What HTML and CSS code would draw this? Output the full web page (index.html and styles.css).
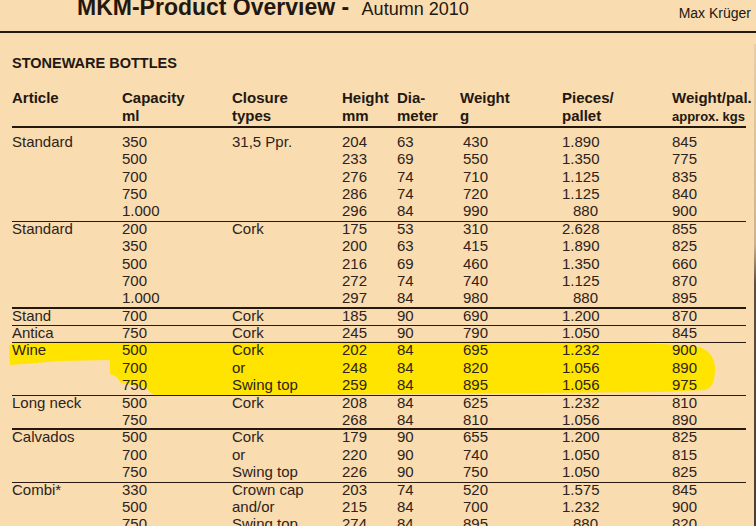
FILE: index.html
```html
<!DOCTYPE html>
<html lang="en">
<head>
<meta charset="utf-8">
<title>MKM-Product Overview - Autumn 2010</title>
<link rel="stylesheet" href="styles.css">
</head>
<body>
<div class="page">
  <svg class="marker" width="756" height="526" viewBox="0 0 756 526" aria-hidden="true">
    <path d="M 9 346 C 9 342, 30 341, 60 341 L 540 341 C 620 342, 680 344, 700 347 C 712 352, 716 362, 715 372 C 714 382, 712 388, 705 390 L 660 392 L 420 394 L 155 396 C 150 393, 148 389, 145 387 L 121 383 L 117 377 L 110 374 L 110 360 L 60 361 L 10 365 Z" fill="#ffe400"/>
  </svg>

  <header class="topbar">
    <h1 class="title"><span class="title-main">MKM-Product Overview -</span> <span class="title-season">Autumn 2010</span></h1>
    <div class="author">Max Krüger</div>
  </header>

  <section class="sheet">
    <h2 class="section-title">STONEWARE BOTTLES</h2>
    <div class="table">
      <div class="row head">
        <div class="c c1">Article</div>
        <div class="c c2">Capacity<br>ml</div>
        <div class="c c3">Closure<br>types</div>
        <div class="c c4">Height<br>mm</div>
        <div class="c c5">Dia-<br>meter</div>
        <div class="c c6">Weight<br>g</div>
        <div class="c c7">Pieces/<br>pallet</div>
        <div class="c c8">Weight/pal.<br><span class="small">approx. kgs</span></div>
      </div>
      <div class="body">
        <div class="row"><div class="c c1">Standard</div><div class="c c2">350</div><div class="c c3">31,5 Ppr.</div><div class="c c4">204</div><div class="c c5">63</div><div class="c c6">430</div><div class="c c7">1.890</div><div class="c c8">845</div></div>
        <div class="row"><div class="c c1"></div><div class="c c2">500</div><div class="c c3"></div><div class="c c4">233</div><div class="c c5">69</div><div class="c c6">550</div><div class="c c7">1.350</div><div class="c c8">775</div></div>
        <div class="row"><div class="c c1"></div><div class="c c2">700</div><div class="c c3"></div><div class="c c4">276</div><div class="c c5">74</div><div class="c c6">710</div><div class="c c7">1.125</div><div class="c c8">835</div></div>
        <div class="row"><div class="c c1"></div><div class="c c2">750</div><div class="c c3"></div><div class="c c4">286</div><div class="c c5">74</div><div class="c c6">720</div><div class="c c7">1.125</div><div class="c c8">840</div></div>
        <div class="row thin"><div class="c c1"></div><div class="c c2">1.000</div><div class="c c3"></div><div class="c c4">296</div><div class="c c5">84</div><div class="c c6">990</div><div class="c c7">880</div><div class="c c8">900</div></div>

        <div class="row"><div class="c c1">Standard</div><div class="c c2">200</div><div class="c c3">Cork</div><div class="c c4">175</div><div class="c c5">53</div><div class="c c6">310</div><div class="c c7">2.628</div><div class="c c8">855</div></div>
        <div class="row"><div class="c c1"></div><div class="c c2">350</div><div class="c c3"></div><div class="c c4">200</div><div class="c c5">63</div><div class="c c6">415</div><div class="c c7">1.890</div><div class="c c8">825</div></div>
        <div class="row"><div class="c c1"></div><div class="c c2">500</div><div class="c c3"></div><div class="c c4">216</div><div class="c c5">69</div><div class="c c6">460</div><div class="c c7">1.350</div><div class="c c8">660</div></div>
        <div class="row"><div class="c c1"></div><div class="c c2">700</div><div class="c c3"></div><div class="c c4">272</div><div class="c c5">74</div><div class="c c6">740</div><div class="c c7">1.125</div><div class="c c8">870</div></div>
        <div class="row thick"><div class="c c1"></div><div class="c c2">1.000</div><div class="c c3"></div><div class="c c4">297</div><div class="c c5">84</div><div class="c c6">980</div><div class="c c7">880</div><div class="c c8">895</div></div>

        <div class="row thin"><div class="c c1">Stand</div><div class="c c2">700</div><div class="c c3">Cork</div><div class="c c4">185</div><div class="c c5">90</div><div class="c c6">690</div><div class="c c7">1.200</div><div class="c c8">870</div></div>

        <div class="row thin"><div class="c c1">Antica</div><div class="c c2">750</div><div class="c c3">Cork</div><div class="c c4">245</div><div class="c c5">90</div><div class="c c6">790</div><div class="c c7">1.050</div><div class="c c8">845</div></div>

        <div class="row"><div class="c c1">Wine</div><div class="c c2">500</div><div class="c c3">Cork</div><div class="c c4">202</div><div class="c c5">84</div><div class="c c6">695</div><div class="c c7">1.232</div><div class="c c8">900</div></div>
        <div class="row"><div class="c c1"></div><div class="c c2">700</div><div class="c c3">or</div><div class="c c4">248</div><div class="c c5">84</div><div class="c c6">820</div><div class="c c7">1.056</div><div class="c c8">890</div></div>
        <div class="row thin"><div class="c c1"></div><div class="c c2">750</div><div class="c c3">Swing top</div><div class="c c4">259</div><div class="c c5">84</div><div class="c c6">895</div><div class="c c7">1.056</div><div class="c c8">975</div></div>

        <div class="row"><div class="c c1">Long neck</div><div class="c c2">500</div><div class="c c3">Cork</div><div class="c c4">208</div><div class="c c5">84</div><div class="c c6">625</div><div class="c c7">1.232</div><div class="c c8">810</div></div>
        <div class="row thick"><div class="c c1"></div><div class="c c2">750</div><div class="c c3"></div><div class="c c4">268</div><div class="c c5">84</div><div class="c c6">810</div><div class="c c7">1.056</div><div class="c c8">890</div></div>

        <div class="row"><div class="c c1">Calvados</div><div class="c c2">500</div><div class="c c3">Cork</div><div class="c c4">179</div><div class="c c5">90</div><div class="c c6">655</div><div class="c c7">1.200</div><div class="c c8">825</div></div>
        <div class="row"><div class="c c1"></div><div class="c c2">700</div><div class="c c3">or</div><div class="c c4">220</div><div class="c c5">90</div><div class="c c6">740</div><div class="c c7">1.050</div><div class="c c8">815</div></div>
        <div class="row thin"><div class="c c1"></div><div class="c c2">750</div><div class="c c3">Swing top</div><div class="c c4">226</div><div class="c c5">90</div><div class="c c6">750</div><div class="c c7">1.050</div><div class="c c8">825</div></div>

        <div class="row"><div class="c c1">Combi*</div><div class="c c2">330</div><div class="c c3">Crown cap</div><div class="c c4">203</div><div class="c c5">74</div><div class="c c6">520</div><div class="c c7">1.575</div><div class="c c8">845</div></div>
        <div class="row"><div class="c c1"></div><div class="c c2">500</div><div class="c c3">and/or</div><div class="c c4">215</div><div class="c c5">84</div><div class="c c6">700</div><div class="c c7">1.232</div><div class="c c8">900</div></div>
        <div class="row"><div class="c c1"></div><div class="c c2">750</div><div class="c c3">Swing top</div><div class="c c4">274</div><div class="c c5">84</div><div class="c c6">895</div><div class="c c7">880</div><div class="c c8">820</div></div>
      </div>
    </div>
  </section>

  <div class="edge"></div>
</div>
</body>
</html>
```

FILE: styles.css
```css
html, body {
  margin: 0;
  padding: 0;
  background: #f9dcb0;
}

body {
  font-family: "Liberation Sans", Arial, sans-serif;
  color: #2d231b;
}

.page {
  position: relative;
  width: 756px;
  height: 526px;
  overflow: hidden;
  background: #f9dcb0;
}

.marker {
  position: absolute;
  left: 0;
  top: 0;
  z-index: 0;
  pointer-events: none;
}

.topbar {
  position: relative;
  z-index: 1;
  display: flex;
  justify-content: space-between;
  align-items: flex-start;
  margin-top: -4.5px;
  height: 35.5px;
  padding: 0 5px 0 77px;
  border-bottom: 2px solid #24180f;
}

.title {
  margin: 0;
  font-size: 23px;
  line-height: 23px;
  font-weight: normal;
  color: #221811;
  white-space: nowrap;
}

.title-main {
  font-weight: bold;
  margin-right: 6px;
}

.title-season {
  font-size: 18px;
  line-height: 23px;
}

.author {
  margin-top: 9.65px;
  font-size: 14px;
  line-height: 16px;
  color: #221811;
}

.sheet {
  position: relative;
  z-index: 1;
  padding: 0 10px 0 12px;
}

.section-title {
  margin: 22px 0 0;
  font-size: 14.5px;
  line-height: 16px;
  font-weight: bold;
  color: #221811;
}

.table {
  margin-top: 17.8px;
}

.row {
  display: grid;
  grid-template-columns: 110px 110px 110px 55px 63px 102px 110px 74px;
  box-sizing: border-box;
  height: 17.4px;
  font-size: 15px;
  line-height: 14px;
  white-space: nowrap;
}

.row.head {
  height: auto;
  font-weight: bold;
  line-height: 18px;
  color: #221811;
  border-bottom: 2px solid #24180f;
}

.head .small {
  font-size: 13px;
}

.body {
  padding-top: 7px;
}

.row.thin {
  border-bottom: 1px solid #2a1b10;
}

.row.thick {
  border-bottom: 2px solid #24180f;
}

.c {
  overflow: visible;
}

.body .c4 {
  text-align: right;
  padding-right: 31px;
}

.body .c6 {
  padding-left: 3px;
}

.body .c7 {
  text-align: right;
  padding-right: 74px;
}

.edge {
  position: absolute;
  right: 0;
  top: 44px;
  width: 2px;
  bottom: 0;
  z-index: 2;
  background: linear-gradient(to bottom, rgba(150, 130, 110, 0.15) 0, rgba(120, 100, 80, 0.35) 200px, #5c4e42 240px, #4a3e34 100%);
}
```
